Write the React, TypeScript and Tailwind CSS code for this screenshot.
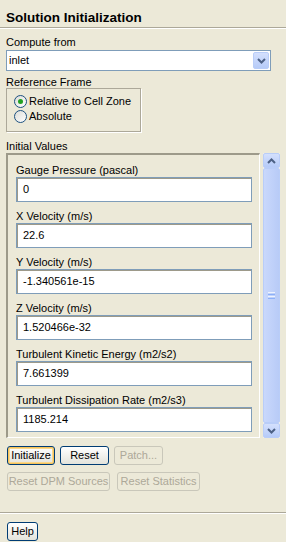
import React from 'react'

const fields = [
  { label: 'Gauge Pressure (pascal)', value: '0' },
  { label: 'X Velocity (m/s)', value: '22.6' },
  { label: 'Y Velocity (m/s)', value: '-1.340561e-15' },
  { label: 'Z Velocity (m/s)', value: '1.520466e-32' },
  { label: 'Turbulent Kinetic Energy (m2/s2)', value: '7.661399' },
  { label: 'Turbulent Dissipation Rate (m2/s3)', value: '1185.214' },
]

const Chevron = ({ up }: { up?: boolean }) => (
  <svg width="9" height="6" viewBox="0 0 9 6">
    <path
      d={up ? 'M1 5 L4.5 1.5 L8 5' : 'M1 1 L4.5 4.5 L8 1'}
      fill="none"
      stroke="#4d6185"
      strokeWidth="2"
    />
  </svg>
)

const Radio = ({ checked }: { checked?: boolean }) => (
  <span className="flex h-[13px] w-[13px] items-center justify-center rounded-full border border-[#1c5180] bg-gradient-to-br from-[#dcdcd7] to-white">
    {checked && <span className="h-[5px] w-[5px] rounded-full bg-[#21a121]" />}
  </span>
)

const XpButton = ({ label, w, focused, disabled }: { label: string; w: string; focused?: boolean; disabled?: boolean }) => {
  if (disabled) {
    return (
      <div className={`${w} flex h-[19px] items-center justify-center rounded-[3px] border border-[#c9c7ba] text-[#aca899]`}>
        {label}
      </div>
    )
  }
  return (
    <div className={`${w} flex h-[19px] items-center justify-center rounded-[3px] border border-[#003c74] bg-gradient-to-b from-white to-[#e3e3db] ${focused ? 'shadow-[inset_0_0_0_1px_#f5c35b,inset_0_0_0_2px_#fbd88b]' : ''}`}>
      {label}
    </div>
  )
}

const App = () => {
  return (
    <div className="flex h-[542px] w-[286px] flex-col overflow-hidden bg-[#ece9d8] text-[11px] leading-[13px] text-black" style={{ fontFamily: '"Liberation Sans", Arial, sans-serif' }}>
      {/* header */}
      <div className="h-[27px] px-[6px] pt-[10px] text-[13.5px] font-bold leading-[16px]">Solution Initialization</div>
      <div className="h-px bg-[#aca899]" />
      <div className="h-px bg-white" />

      <div className="flex flex-col px-[6px]">
        <div className="mt-[7px] h-[14px]">Compute from</div>
        <div className="flex h-[21px] w-[265px] items-center border border-[#7f9db9] bg-white">
          <span className="flex-1 pl-[2px]">inlet</span>
          <span className="mr-px flex h-[17px] w-[16px] items-center justify-center rounded-[2px] border border-[#b9cdf8] bg-gradient-to-b from-[#d4e0fd] to-[#b6cbf8]">
            <Chevron />
          </span>
        </div>

        <div className="mt-[5px] h-[12px]">Reference Frame</div>
        <div className="flex h-[44px] w-[135px] flex-col gap-[2px] border border-[#aca899] pl-[7px] pt-[6px] shadow-[1px_1px_0_white]">
          <div className="flex h-[13px] items-center gap-[2px]">
            <Radio checked />
            <span>Relative to Cell Zone</span>
          </div>
          <div className="flex h-[13px] items-center gap-[2px]">
            <Radio />
            <span>Absolute</span>
          </div>
        </div>

        <div className="mt-[8px] h-[13px]">Initial Values</div>
        <div className="flex h-[285px] gap-[3px]">
          <div className="flex w-[255px] flex-col border-l-2 border-t-2 border-l-[#9d9a8a] border-t-[#9d9a8a] border-r border-b border-r-white border-b-white pl-[8px] pt-[8px]">
            {fields.map((f) => (
              <div key={f.label} className="mb-[7px] flex flex-col">
                <div className="h-[14px] leading-[14px]">{f.label}</div>
                <div className="flex h-[25px] w-[236px] items-center border border-[#7f9db9] bg-white pl-[6px] shadow-[inset_1px_1px_0_#9d9a8a]">
                  {f.value}
                </div>
              </div>
            ))}
          </div>

          {/* scrollbar */}
          <div className="flex w-[17px] flex-col bg-[#f3f1ec]">
            <div className="flex h-[15px] items-center justify-center rounded-[2px] border border-[#b9cdf8] bg-gradient-to-b from-[#d4e0fd] to-[#b6cbf8]">
              <Chevron up />
            </div>
            <div className="flex flex-1 items-center justify-center rounded-[2px] border border-[#b9cdf8] bg-gradient-to-r from-[#c9d8fc] to-[#b8cbf7]">
              <div className="flex flex-col gap-px">
                <span className="h-px w-[7px] bg-[#eef3fe]" />
                <span className="h-px w-[7px] bg-[#8cb0f8]" />
                <span className="h-px w-[7px] bg-[#eef3fe]" />
                <span className="h-px w-[7px] bg-[#8cb0f8]" />
              </div>
            </div>
            <div className="flex h-[15px] items-center justify-center rounded-[2px] border border-[#b9cdf8] bg-gradient-to-b from-[#d4e0fd] to-[#b6cbf8]">
              <Chevron />
            </div>
          </div>
        </div>

        {/* action buttons */}
        <div className="mt-[8px] flex gap-[5px] pl-px">
          <XpButton label="Initialize" w="w-[48px]" focused />
          <XpButton label="Reset" w="w-[49px]" />
          <XpButton label="Patch..." w="w-[49px]" disabled />
        </div>
        <div className="mt-[7px] flex gap-[7px] pl-px">
          <XpButton label="Reset DPM Sources" w="w-[103px]" disabled />
          <XpButton label="Reset Statistics" w="w-[83px]" disabled />
        </div>
      </div>

      <div className="mt-[21px] h-px bg-[#aca899]" />
      <div className="h-px bg-white" />
      <div className="mt-[8px] pl-[7px]">
        <XpButton label="Help" w="w-[31px]" />
      </div>
    </div>
  )
}

export default App
